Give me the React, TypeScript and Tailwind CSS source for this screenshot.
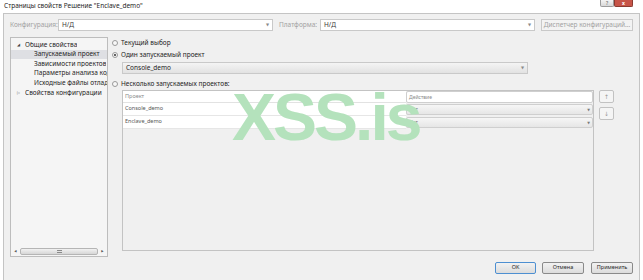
import React from "react";

const font = "font-['Noto_Sans','DejaVu_Sans',sans-serif]";

function Select({ value, className = "" }: { value: string; className?: string }) {
  return (
    <div
      className={`flex h-[12px] items-center justify-between border border-[#c9c9c9] bg-white pl-[3px] pr-[3px] ${className}`}
    >
      <span>{value}</span>
      <span className="text-[4px] text-[#8a8a8a]">▼</span>
    </div>
  );
}

function Radio({ checked, label }: { checked?: boolean; label: string }) {
  return (
    <div className="flex h-[12px] items-center gap-[3px]">
      <span className="flex h-[6px] w-[6px] items-center justify-center rounded-full border border-[#9a9a9a] bg-[#f8f8f8]">
        {checked && <span className="h-[2px] w-[2px] rounded-full bg-[#333]" />}
      </span>
      <span>{label}</span>
    </div>
  );
}

function ActionCell() {
  return (
    <div className="flex h-[11px] items-center justify-between rounded-[2px] border border-[#cfcfcf] bg-gradient-to-b from-[#f6f6f6] to-[#e6e6e6] px-[2px] text-[#7a7a7a]">
      <span className="text-[5px]">Нет</span>
      <span className="text-[3.5px]">▼</span>
    </div>
  );
}

export default function App() {
  const tree = [
    { label: "Общие свойства", indent: "pl-[6px]", mark: "◢" },
    { label: "Запускаемый проект", indent: "pl-[23px]", selected: true },
    { label: "Зависимости проектов", indent: "pl-[23px]" },
    { label: "Параметры анализа кода", indent: "pl-[23px]" },
    { label: "Исходные файлы отладки", indent: "pl-[23px]" },
    { label: "Свойства конфигурации", indent: "pl-[6px]", mark: "▷" },
  ];

  return (
    <div className={`relative flex h-[280px] w-[643px] flex-col overflow-hidden bg-white text-[6.5px] leading-none text-[#1e1e1e] ${font}`}>
      {/* title bar */}
      <div className="flex h-[13px] items-start justify-between pl-[4px] pr-[10px]">
        <span className="pt-[3px] text-[6.5px]">Страницы свойств Решение "Enclave_demo"</span>
        <div className="flex">
          <div className="flex h-[7px] w-[14px] items-center justify-center rounded-b-[2px] border border-t-0 border-[#9c9c9c] bg-gradient-to-b from-[#f4f4f4] to-[#d8d8d8] text-[5px] text-[#555]">
            ?
          </div>
          <div className="flex h-[7px] w-[19px] items-center justify-center rounded-b-[2px] border border-t-0 border-[#8a3a30] bg-[#c75448] text-[5px] font-bold text-white">
            x
          </div>
        </div>
      </div>

      {/* body */}
      <div className="mx-[3px] flex flex-1 flex-col border-l border-r border-t border-[#c4c4c4] bg-[#f0f0f0] pl-[6px] pt-[5px]">
        {/* config row */}
        <div className="flex h-[12px] items-center text-[#a2a2a2]">
          <span className="w-[48px]">Конфигурация:</span>
          <Select value="Н/Д" className="w-[215px] text-[#3a3a3a]" />
          <span className="ml-[6px] w-[41px]">Платформа:</span>
          <Select value="Н/Д" className="w-[215px] text-[#3a3a3a]" />
          <div className="ml-[6px] flex h-[12px] w-[92px] items-center justify-center border border-[#c9c9c9] bg-[#f3f3f3]">
            Диспетчер конфигураций...
          </div>
        </div>

        <div className="mt-[6px] flex">
          {/* tree */}
          <div className="flex h-[220px] w-[98px] flex-col border border-[#bdbdbd] bg-[#f5f5f5] pt-[2px]">
            {tree.map((t) => (
              <div
                key={t.label}
                className={`flex h-[9.6px] items-center whitespace-nowrap ${t.indent} ${t.selected ? "bg-[#dedfe3]" : ""}`}
              >
                {t.mark && <span className="mr-[4px] w-[4px] text-[4px] text-[#444]">{t.mark}</span>}
                <span className="overflow-hidden">{t.label}</span>
              </div>
            ))}
            <div className="flex-1" />
            <div className="mx-[2px] mb-[1px] flex h-[8px] items-center gap-[2px] text-[3px] text-[#555]">
              <span className="w-[5px] text-center">◀</span>
              <div className="flex h-[7px] flex-1 items-center justify-center rounded-[2px] border border-[#b5b5b5] bg-gradient-to-b from-[#f2f2f2] to-[#d6d6d6]">
                <span className="h-[3px] w-[5px] border-y border-[#8a8a8a]" />
              </div>
              <span className="w-[5px] text-center">▶</span>
            </div>
          </div>

          {/* right side */}
          <div className="ml-[4px] flex flex-col">
            <Radio label="Текущий выбор" />
            <Radio checked label="Один запускаемый проект" />
            <Select value="Console_demo" className="ml-[10px] mt-[1px] w-[406px] border-[#acacac] bg-gradient-to-b from-[#f4f4f4] to-[#e2e2e2]" />
            <div className="mt-[4px]">
              <Radio label="Несколько запускаемых проектов:" />
            </div>
            <div className="flex">
              <div className="ml-[10px] flex h-[161px] w-[472px] flex-col border border-[#c3c3c3]">
                <div className="flex">
                  <div className="flex h-[12px] w-[283px] items-center border-b border-[#e2e2e2] bg-white pl-[2px] text-[5.5px] text-[#8a8a8a]">
                    Проект
                  </div>
                  <div className="flex h-[12px] flex-1 items-center rounded-[2px] border border-[#cfcfcf] bg-white pl-[2px] text-[5px] text-[#8a8a8a]">
                    Действие
                  </div>
                </div>
                {["Console_demo", "Enclave_demo"].map((p) => (
                  <div key={p} className="flex h-[13px]">
                    <div className="flex w-[283px] items-center border-b border-[#e6e6e6] bg-white pl-[2px] text-[5.5px] text-[#555]">
                      {p}
                    </div>
                    <div className="flex-1 pt-[1px]">
                      <ActionCell />
                    </div>
                  </div>
                ))}
              </div>
              <div className="ml-[5px] flex flex-col gap-[4px]">
                <div className="flex h-[13px] w-[15px] items-center justify-center rounded-[2px] border border-[#c2c2c2] bg-[#f5f5f5] text-[6px] text-[#999]">
                  ↑
                </div>
                <div className="flex h-[13px] w-[15px] items-center justify-center rounded-[2px] border border-[#c2c2c2] bg-[#f5f5f5] text-[6px] text-[#999]">
                  ↓
                </div>
              </div>
            </div>
          </div>
        </div>

        {/* buttons */}
        <div className="mt-[5px] flex justify-end pr-[6px]">
          <div className="flex h-[12px] w-[41px] items-center justify-center rounded-[2px] border border-[#4d8fd1] bg-gradient-to-b from-[#f2f2f2] to-[#dcdcdc] text-[5.5px]">
            OK
          </div>
          <div className="ml-[6px] flex h-[12px] w-[42px] items-center justify-center rounded-[2px] border border-[#8a8a8a] bg-gradient-to-b from-[#f2f2f2] to-[#dcdcdc] text-[5.5px]">
            Отмена
          </div>
          <div className="ml-[7px] flex h-[12px] w-[42px] items-center justify-center rounded-[2px] border border-[#8a8a8a] bg-gradient-to-b from-[#f2f2f2] to-[#dcdcdc] text-[5.5px]">
            Применить
          </div>
        </div>
      </div>

      {/* watermark */}
      <div className="pointer-events-none absolute left-[232px] top-[84px] font-['Liberation_Sans',Arial,sans-serif] text-[66px] font-bold leading-none tracking-[-3px] text-[#b4e2bc]">
        XSS.is
      </div>
    </div>
  );
}
